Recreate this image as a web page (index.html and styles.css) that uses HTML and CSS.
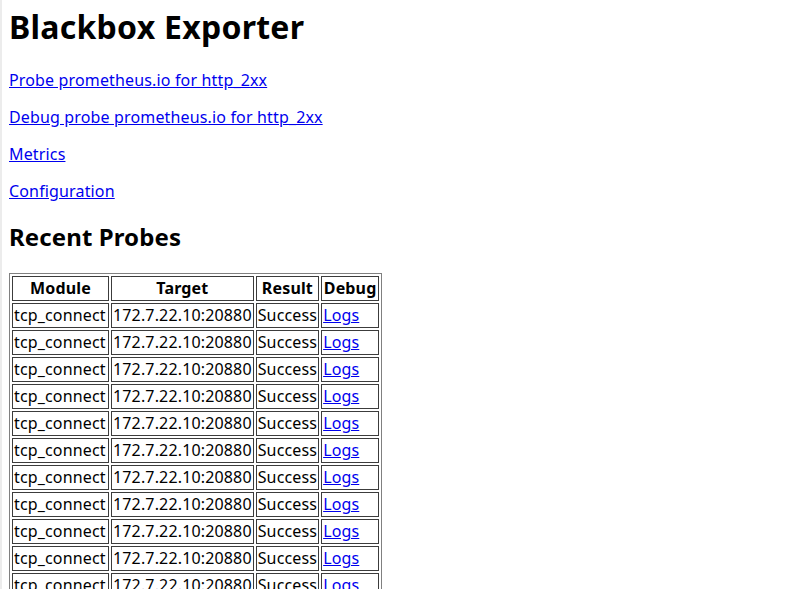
FILE: index.html
```html
<!DOCTYPE html>
<html>
<head>
<meta charset="utf-8">
<title>Blackbox Exporter</title>
<link rel="stylesheet" href="styles.css">
</head>
<body class="page">
<h1 class="title">Blackbox Exporter</h1>
<p class="nav"><a class="link" href="#">Probe prometheus.io for http_2xx</a></p>
<p class="nav"><a class="link" href="#">Debug probe prometheus.io for http_2xx</a></p>
<p class="nav"><a class="link" href="#">Metrics</a></p>
<p class="nav"><a class="link" href="#">Configuration</a></p>
<h2 class="subtitle">Recent Probes</h2>
<table class="probes">
<tr><th class="c-module">Module</th><th class="c-target">Target</th><th class="c-result">Result</th><th class="c-debug">Debug</th></tr>
<tr><td>tcp_connect</td><td>172.7.22.10:20880</td><td>Success</td><td><a class="link" href="#">Logs</a></td></tr>
<tr><td>tcp_connect</td><td>172.7.22.10:20880</td><td>Success</td><td><a class="link" href="#">Logs</a></td></tr>
<tr><td>tcp_connect</td><td>172.7.22.10:20880</td><td>Success</td><td><a class="link" href="#">Logs</a></td></tr>
<tr><td>tcp_connect</td><td>172.7.22.10:20880</td><td>Success</td><td><a class="link" href="#">Logs</a></td></tr>
<tr><td>tcp_connect</td><td>172.7.22.10:20880</td><td>Success</td><td><a class="link" href="#">Logs</a></td></tr>
<tr><td>tcp_connect</td><td>172.7.22.10:20880</td><td>Success</td><td><a class="link" href="#">Logs</a></td></tr>
<tr><td>tcp_connect</td><td>172.7.22.10:20880</td><td>Success</td><td><a class="link" href="#">Logs</a></td></tr>
<tr><td>tcp_connect</td><td>172.7.22.10:20880</td><td>Success</td><td><a class="link" href="#">Logs</a></td></tr>
<tr><td>tcp_connect</td><td>172.7.22.10:20880</td><td>Success</td><td><a class="link" href="#">Logs</a></td></tr>
<tr><td>tcp_connect</td><td>172.7.22.10:20880</td><td>Success</td><td><a class="link" href="#">Logs</a></td></tr>
<tr><td>tcp_connect</td><td>172.7.22.10:20880</td><td>Success</td><td><a class="link" href="#">Logs</a></td></tr>
<tr><td>tcp_connect</td><td>172.7.22.10:20880</td><td>Success</td><td><a class="link" href="#">Logs</a></td></tr>
<tr><td>tcp_connect</td><td>172.7.22.10:20880</td><td>Success</td><td><a class="link" href="#">Logs</a></td></tr>
</table>
</body>
</html>
```
FILE: styles.css
```css
html {
  border-left: 2px solid #ececec;
  background: #fff;
}
.page {
  margin: 0 8px 0 7px;
  padding-top: 6px;
  font-family: "Noto Sans", "Open Sans", sans-serif;
  font-size: 16px;
  line-height: 21px;
  color: #000;
  letter-spacing: 0.15px;
}
.title {
  font-size: 32px;
  line-height: 42px;
  font-weight: bold;
  letter-spacing: 0.25px;
  margin: 0 0 22px;
}
.nav {
  margin: 16px 0;
}
.link {
  color: #0000ee;
  text-decoration: underline;
}
.subtitle {
  font-size: 24px;
  line-height: 32px;
  font-weight: bold;
  letter-spacing: 0.1px;
  margin: 19px 0 20px;
}
.probes {
  border: 1px solid #808080;
  border-spacing: 2px;
  border-collapse: separate;
}
.probes th,
.probes td {
  border: 1px solid #3c3c3c;
  padding: 1px;
  line-height: 21px;
}
.probes th {
  font-weight: bold;
  text-align: center;
}
.probes td {
  text-align: left;
}
.c-module { width: 93px; }
.c-target { width: 138px; }
.c-result { width: 59px; }
.c-debug { width: 54px; }
```
